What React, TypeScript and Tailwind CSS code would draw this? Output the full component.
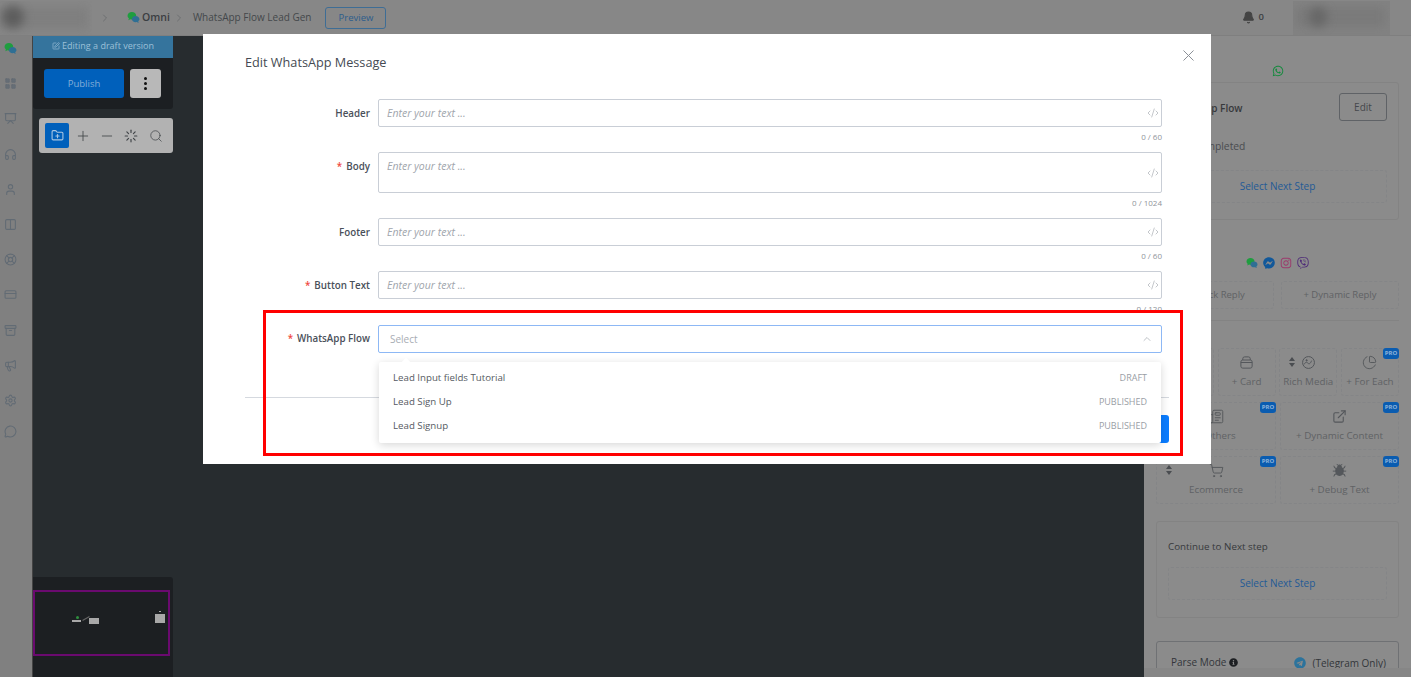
import React from 'react';
import {
  Bell, Bug, ChevronRight, ChevronUp, CodeXml, Columns2, ExternalLink, FolderPlus, Headphones, LayoutGrid, LifeBuoy, Loader,
  Megaphone, Minus, MessageCircle, Newspaper, PieChart, Plus, Presentation, Search, Settings, ShoppingCart, SquarePen, User,
  Archive, CreditCard, X,
} from 'lucide-react';
import { FaFacebookMessenger, FaInfoCircle, FaInstagram, FaTelegram, FaViber, FaWhatsapp } from 'react-icons/fa';

const font = { fontFamily: '"Open Sans", sans-serif' };

const OmniLogo = ({ size = 12 }: { size?: number }) => (
  <svg width={size} height={size} viewBox="0 0 24 24">
    <path d="M9 2c4.400 0 8 3 8 6.800S13.400 15.600 9 15.600c-.9 0-1.700-.1-2.500-.4L2.500 17l1-3.400C2 12.400 1 10.700 1 8.800 1 5 4.600 2 9 2z" fill="#1f9d3f" />
    <path d="M16 9c3.900 0 7 2.600 7 5.800 0 1.700-.9 3.200-2.300 4.300l.8 3-3.500-1.600c-.6.2-1.300.2-2 .2-3.900 0-7-2.600-7-5.900S12.100 9 16 9z" fill="#2f6f94" />
  </svg>
);

const CardIcon = () => (
  <svg width="15" height="15" viewBox="0 0 24 24" fill="none" stroke="currentColor" strokeWidth="1.600">
    <rect x="3" y="8" width="18" height="13" rx="3" />
    <path d="M6 8V6a3 3 0 0 1 3-3h6a3 3 0 0 1 3 3v2" />
    <path d="M3 12h18" />
  </svg>
);

const RichIcon = () => (
  <svg width="15" height="15" viewBox="0 0 24 24" fill="none" stroke="currentColor" strokeWidth="1.600">
    <circle cx="12" cy="12" r="9.500" />
    <path d="M5 15c2-4 4-4 6-2s4 1 6-4" />
    <circle cx="9" cy="8.500" r="1" fill="currentColor" />
  </svg>
);

const Sorter = () => (
  <svg width="6" height="10" viewBox="0 0 6 10" className="absolute left-[9px] top-[8px]" fill="#4a4d51">
    <path d="M3 0l3 4H0zM3 10l3-4H0z" />
  </svg>
);

const railIcons = [
  <OmniLogo size={13} />,
  <LayoutGrid size={13} fill="#666e76" strokeWidth={1} />,
  <Presentation size={13} />,
  <Headphones size={13} />,
  <User size={13} />,
  <Columns2 size={13} />,
  <LifeBuoy size={13} />,
  <CreditCard size={13} />,
  <Archive size={13} />,
  <Megaphone size={13} />,
  <Settings size={13} />,
  <MessageCircle size={13} className="-mt-[8px]" />,
];

const Field = ({ label, required, tall, count }: { label: string; required?: boolean; tall?: boolean; count: string }) => (
  <div>
    <div className="flex gap-2">
      <label className="w-[125px] pt-[7px] text-right text-[9.800px] leading-[15px] font-semibold text-[#4a505a]">
        {required && <span className="mr-1 text-[#f0483e]">*</span>}
        {label}
      </label>
      <div className={`relative w-[784px] rounded-[2px] border border-[#c9ced6] bg-white px-2 pt-[6px] ${tall ? 'h-[41px]' : 'h-[28px]'}`}>
        <span className="block text-[10.500px] leading-[15px] text-[#a0a5ac] italic">Enter your text ...</span>
        <CodeXml size={12} strokeWidth={1.25} className="absolute right-[2px] top-1/2 -translate-y-1/2 text-[#a0a5ac]" />
      </div>
    </div>
    <div className="mt-[4px] mr-[7px] h-[12px] text-right text-[8px] leading-[12px] text-[#8f949b]">{count}</div>
  </div>
);

const Tile = ({ icon, label, className, pro, sorter }: { icon: React.ReactNode; label: string; className: string; pro?: boolean; sorter?: boolean }) => (
  <div className={`relative flex h-[48px] flex-col items-center justify-center gap-[5px] rounded-[3px] border border-dashed border-[#848587] text-[9.800px] leading-[14px] text-[#606265] ${className}`}>
    {sorter && <Sorter />}
    {pro && <span className="absolute -right-px -top-px h-[11px] w-[16px] rounded-[3px] bg-[#0a5cb0] text-center text-[6px] leading-[11px] font-bold text-[#8fb4da]">PRO</span>}
    <span className="flex h-[15px] items-center text-[#54575b]">{icon}</span>
    <span className="whitespace-nowrap">{label}</span>
  </div>
);

const SelectNext = ({ className }: { className: string }) => (
  <div className={`flex h-[33px] items-center justify-center rounded-[3px] border border-dashed border-[#848587] text-[10px] text-[#245a96] ${className}`}>
    Select Next Step
  </div>
);

export default function App() {
  return (
    <div className="relative flex h-[677px] w-[1411px] flex-col overflow-hidden bg-[#272c2f] antialiased" style={font}>
      {/* top bar */}
      <header className="flex h-[36px] shrink-0 items-center border-b border-[#7f7f7f] bg-[#878787] text-[#3b3e42]">
        <div className="relative h-[34px] w-[92px] overflow-hidden">
          <div className="absolute left-0 top-[6px] h-[22px] w-[88px] bg-[#7f7f7f] blur-[5px]" />
          <div className="absolute left-[2px] top-[5px] h-[22px] w-[22px] rounded-full bg-[#5d5d5d] blur-[5px]" />
        </div>
        <ChevronRight size={12} strokeWidth={1.5} className="ml-[7px] text-[#65676a]" />
        <span className="ml-[16px]"><OmniLogo size={13} /></span>
        <span className="ml-[2px] text-[10.500px] font-semibold">Omni</span>
        <ChevronRight size={12} strokeWidth={1.5} className="ml-[3px] text-[#65676a]" />
        <span className="ml-[8px] text-[10px] text-[#44474b]">WhatsApp Flow Lead Gen</span>
        <button className="ml-[14px] mt-[1px] h-[22px] w-[61px] rounded-[3px] border border-[#3e6d95] text-[9.500px] text-[#2c5d8c]">Preview</button>
        <div className="ml-auto flex items-center gap-[4px]">
          <Bell size={13} fill="#444" className="text-[#444]" />
          <span className="text-[9.500px] font-semibold">0</span>
        </div>
        <div className="relative ml-[29px] mr-[21px] h-[34px] w-[97px] overflow-hidden bg-[#828282]">
          <div className="absolute left-[2px] top-[6px] h-[20px] w-[90px] bg-[#7a7a7a] blur-[5px]" />
          <div className="absolute left-[16px] top-[6px] h-[20px] w-[18px] rounded-full bg-[#676767] blur-[5px]" />
        </div>
      </header>

      <div className="flex min-h-0 flex-1">
        {/* icon rail */}
        <nav className="flex w-[33px] shrink-0 flex-col items-start border-r border-[#444] bg-[#808080] pl-[4px] text-[#626b74]">
          <div className="-mt-[5px]">
            {railIcons.map((icon, i) => (
              <div key={i} className="flex h-[35.200px] w-[13px] items-center justify-center">{icon}</div>
            ))}
          </div>
        </nav>

        {/* canvas */}
        <main className="flex min-w-0 flex-1 flex-col">
          <div className="w-[140px]">
            <div className="flex h-[22px] items-center justify-center gap-[2px] bg-[#35749d] pb-[2px] text-[9px] text-[#9cc0d8]">
              <SquarePen size={8} />
              Editing a draft version
            </div>
            <div className="flex h-[51px] gap-[6px] rounded-b-[3px] bg-[#1c1f22] pl-[11px] pt-[11px]">
              <button className="h-[29px] w-[80px] rounded-[3px] bg-[#0060bb] pt-[1px] text-[9.500px] text-[#84aed8]">Publish</button>
              <button className="flex h-[29px] w-[31px] flex-col items-center justify-center gap-[2px] rounded-[3px] bg-[#b8b8b8]">
                <span className="h-[3px] w-[3px] rounded-full bg-[#111]" />
                <span className="h-[3px] w-[3px] rounded-full bg-[#111]" />
                <span className="h-[3px] w-[3px] rounded-full bg-[#111]" />
              </button>
            </div>
            <div className="ml-[6px] mt-[9px] flex h-[35px] w-[134px] items-center gap-[4px] rounded-[3px] bg-[#b2b2b2] pl-[6px] text-[#3f4347]">
              <span className="flex h-[25px] w-[24px] items-center justify-center rounded-[2px] bg-[#0060bb] text-[#a9c6e2]"><FolderPlus size={13} /></span>
              <span className="flex w-[20px] justify-center"><Plus size={16} strokeWidth={1.25} /></span>
              <span className="flex w-[20px] justify-center"><Minus size={16} strokeWidth={1.25} /></span>
              <span className="flex w-[20px] justify-center"><Loader size={14} strokeWidth={2} /></span>
              <span className="ml-[1px] flex w-[20px] justify-center"><Search size={14} strokeWidth={1.25} /></span>
            </div>
          </div>

          {/* minimap */}
          <div className="mt-auto flex h-[100px] w-[140px] items-start rounded-tr-[3px] bg-[#1c1f22] pt-[13px]">
            <div className="relative h-[66px] w-[137px] border-2 border-[#6a0a6f]">
              <span className="absolute left-[41px] top-[24px] h-[3px] w-[3px] rounded-full bg-[#2f8f3f]" />
              <span className="absolute left-[37px] top-[28px] h-[2px] w-[9px] bg-[#a8a8a8]" />
              <span className="absolute left-[47px] top-[26px] h-px w-[8px] -rotate-[30deg] bg-[#666]" />
              <span className="absolute left-[54px] top-[26px] h-[6px] w-[10px] bg-[#a8a8a8]" />
              <span className="absolute left-[124px] top-[19px] h-px w-[2px] bg-[#a8a8a8]" />
              <span className="absolute left-[120px] top-[22px] h-[9px] w-[10px] bg-[#a8a8a8]" />
            </div>
          </div>
        </main>

        {/* right settings panel */}
        <aside className="flex w-[267px] shrink-0 flex-col bg-[#8b8b8b]">
          <div className="min-h-0 flex-1 overflow-hidden px-[12px] pt-[29px]">
            <div className="flex h-[12px] justify-center"><FaWhatsapp size={12} className="text-[#128a3c]" /></div>
            <section className="mt-[5px] h-[138px] rounded-[3px] border border-[#838383] px-[11px] pt-[10px] text-[#37393c]">
              <div className="flex items-center justify-between">
                <span className="pt-[2px] text-[10px] font-semibold">WhatsApp Flow</span>
                <button className="h-[28px] w-[48px] rounded-[3px] border border-[#5f6266] text-[10px] text-[#45484c]">Edit</button>
              </div>
              <div className="mt-[18px] text-[10.300px] leading-[14px] text-[#4a4c50]">Flow Completed</div>
              <SelectNext className="mt-[17px]" />
            </section>
            <div className="mt-[37px] flex justify-center gap-[5px]">
              <OmniLogo size={12} />
              <FaFacebookMessenger size={12} className="text-[#11589a]" />
              <FaInstagram size={12} className="text-[#9c3a6c]" />
              <FaViber size={12} className="text-[#4e2a78]" />
            </div>
            <div className="mt-[12px] flex justify-between">
              <div className="flex h-[28px] w-[118px] items-center justify-center rounded-[3px] border border-dashed border-[#848587] text-[9.500px] text-[#606265]">+ Quick Reply</div>
              <div className="flex h-[28px] w-[118px] items-center justify-center rounded-[3px] border border-dashed border-[#848587] text-[9.500px] text-[#606265]">+ Dynamic Reply</div>
            </div>
            <hr className="mt-[11px] border-[#838383]" />
            <div className="mt-[27px] flex flex-col gap-[6px]">
              <div className="flex justify-between">
                <Tile className="w-[58px]" icon={<Plus size={15} strokeWidth={1.5} />} label="+ Image" />
                <Tile className="w-[58px]" icon={<CardIcon />} label="+ Card" />
                <Tile className="w-[58px]" sorter icon={<RichIcon />} label="Rich Media" />
                <Tile className="w-[58px]" pro icon={<PieChart size={15} strokeWidth={1.5} />} label="+ For Each" />
              </div>
              <div className="flex justify-between">
                <Tile className="w-[120px]" pro icon={<Newspaper size={15} strokeWidth={1.5} />} label="+ Others" />
                <Tile className="w-[119px]" pro icon={<ExternalLink size={15} strokeWidth={1.75} />} label="+ Dynamic Content" />
              </div>
              <div className="flex justify-between">
                <Tile className="w-[120px]" pro sorter icon={<ShoppingCart size={15} strokeWidth={1.5} />} label="Ecommerce" />
                <Tile className="w-[119px]" pro icon={<Bug size={15} fill="currentColor" strokeWidth={1.5} />} label="+ Debug Text" />
              </div>
            </div>
            <section className="mt-[17px] h-[97px] rounded-[3px] border border-[#838383] px-[11px] pt-[18px]">
              <div className="text-[9.800px] leading-[14px] text-[#37393c]">Continue to Next step</div>
              <SelectNext className="mt-[13px]" />
            </section>
            <section className="mt-[23px] flex h-[40px] items-start justify-between rounded-[3px] border border-[#6f7174] pl-[14px] pr-[12px] pt-[15px] text-[10px] leading-[11px] text-[#33363a]">
              <span className="flex items-center gap-[3px]">Parse Mode <FaInfoCircle size={9} className="text-[#1d1f22]" /></span>
              <span className="flex items-center gap-[6px]"><FaTelegram size={12} className="text-[#2c739c]" />(Telegram Only)</span>
            </section>
          </div>
          <div className="h-[9px] shrink-0 bg-[#868686]" />
        </aside>
      </div>

      {/* modal */}
      <div className="absolute left-[203px] top-[34px] h-[430px] w-[1008px] bg-white px-[42px]">
        <button className="absolute right-[13px] top-[12px] text-[#8a8f96]"><X size={19} strokeWidth={1.25} /></button>
        <h2 className="pt-[20px] text-[12.700px] leading-[17px] text-[#454a52]">Edit WhatsApp Message</h2>
        <div className="mt-[28px] flex flex-col gap-[9px]">
          <Field label="Header" count="0 / 60" />
          <Field required tall label="Body" count="0 / 1024" />
          <Field label="Footer" count="0 / 60" />
          <Field required label="Button Text" count="0 / 120" />
        </div>
        <div className="mt-[10px] flex gap-2">
          <label className="w-[125px] pt-[6px] text-right text-[9.800px] leading-[15px] font-semibold text-[#4a505a]">
            <span className="mr-1 text-[#f0483e]">*</span>WhatsApp Flow
          </label>
          <div className="flex h-[28px] w-[784px] items-center justify-between rounded-[2px] border border-[#8db8f5] px-[11px] text-[10px] text-[#a8adb4]">
            Select
            <ChevronUp size={12} strokeWidth={1.5} className="-mr-[3px] text-[#a8adb4]" />
          </div>
        </div>
        <div className="mt-[44px] border-t border-[#d5d9df]" />
        <div className="mt-[17px] flex justify-end">
          <button className="h-[28px] w-[88px] rounded-[3px] bg-[#0a7cff]" />
        </div>

        {/* open dropdown */}
        <div className="absolute left-[176px] top-[328px] z-10 w-[782px] rounded-[2px] bg-white py-[4px] pb-[5px] text-[9.700px] leading-[24px] text-[#555a62] shadow-[0_2px_8px_rgba(0,0,0,0.16)]">
          <span className="absolute left-[24px] -top-[3px] h-[6px] w-[6px] rotate-45 bg-white" />
          <div className="flex justify-between px-[14px]"><span>Lead Input fields Tutorial</span><span className="text-[9px] text-[#9a9ea5]">DRAFT</span></div>
          <div className="flex justify-between px-[14px]"><span>Lead Sign Up</span><span className="text-[9px] text-[#9a9ea5]">PUBLISHED</span></div>
          <div className="flex justify-between px-[14px]"><span>Lead Signup</span><span className="text-[9px] text-[#9a9ea5]">PUBLISHED</span></div>
        </div>

        {/* annotation */}
        <div className="pointer-events-none absolute left-[60px] top-[276px] z-20 h-[146px] w-[920px] border-[3px] border-[#ff0000]" />
      </div>
    </div>
  );
}
